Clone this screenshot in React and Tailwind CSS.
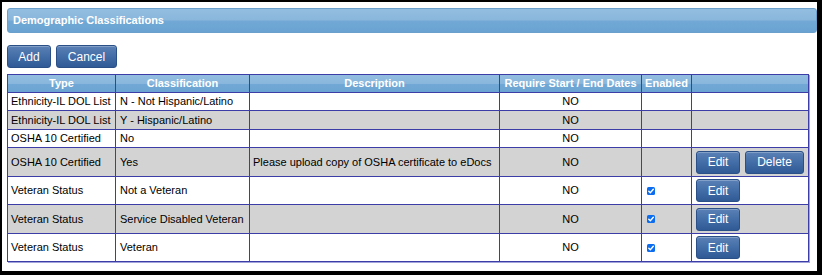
import React from "react";

const rows = [
  { type: "Ethnicity-IL DOL List", cls: "N - Not Hispanic/Latino", desc: "", enabled: false, actions: [], h: "h-[18px]", gray: false },
  { type: "Ethnicity-IL DOL List", cls: "Y - Hispanic/Latino", desc: "", enabled: false, actions: [], h: "h-[19px]", gray: true },
  { type: "OSHA 10 Certified", cls: "No", desc: "", enabled: false, actions: [], h: "h-[18px]", gray: false },
  { type: "OSHA 10 Certified", cls: "Yes", desc: "Please upload copy of OSHA certificate to eDocs", enabled: false, actions: ["Edit", "Delete"], h: "h-[29px]", gray: true },
  { type: "Veteran Status", cls: "Not a Veteran", desc: "", enabled: true, actions: ["Edit"], h: "h-[28px]", gray: false },
  { type: "Veteran Status", cls: "Service Disabled Veteran", desc: "", enabled: true, actions: ["Edit"], h: "h-[29px]", gray: true },
  { type: "Veteran Status", cls: "Veteran", desc: "", enabled: true, actions: ["Edit"], h: "h-[28px]", gray: false },
];

function Btn({ children, w }) {
  return (
    <button
      className={`${w} h-[23px] rounded-[3px] border border-[#2b5088] bg-[linear-gradient(to_bottom,#5b81b6_0%,#456fa8_45%,#2f5a95_100%)] text-white text-[12px] leading-none flex items-center justify-center shadow-[inset_0_1px_0_rgba(255,255,255,0.25)]`}
    >
      {children}
    </button>
  );
}

function Check() {
  return (
    <svg width="8" height="8" viewBox="0 0 8 8" className="block">
      <rect x="0" y="0" width="8" height="8" rx="1.5" fill="#0b6cf0" />
      <path d="M1.8 4.3 L3.3 5.7 L6.3 2.3" stroke="#fff" strokeWidth="1.4" fill="none" strokeLinecap="round" strokeLinejoin="round" />
    </svg>
  );
}

const gloss = "bg-[linear-gradient(to_bottom,#93bee1_0%,#89b6dc_48%,#71a8d5_52%,#6aa3d2_100%)]";
const td = "border border-[#3d3da8] px-[4px] text-[11px] text-black align-middle p-0";

export default function App() {
  return (
    <div className="w-[822px] h-[275px] box-border border-t-2 border-l-2 border-r-[5px] border-b-4 border-black bg-white font-['Liberation_Sans',Arial,sans-serif] overflow-hidden">
      <div className="pt-[6px] pl-[5px]">
        <div className={`h-[25px] rounded-[3px] border border-[#6ba0cc] ${gloss} flex items-center pl-[5px] text-white font-bold text-[11px]`}>
          Demographic Classifications
        </div>
        <div className="flex gap-[5px] mt-[12px]">
          <Btn w="w-[44px]">Add</Btn>
          <Btn w="w-[61px]">Cancel</Btn>
        </div>
        <table className="mt-[6px] table-fixed border-collapse w-[801px] shadow-[1px_1px_0_#a3a3dc]">
          <colgroup>
            <col className="w-[108px]" />
            <col className="w-[134px]" />
            <col className="w-[250px]" />
            <col className="w-[142px]" />
            <col className="w-[50px]" />
            <col className="w-[117px]" />
          </colgroup>
          <thead>
            <tr className={gloss}>
              {["Type", "Classification", "Description", "Require Start / End Dates", "Enabled", ""].map((t, i) => (
                <th key={i} className="border border-[#3d3da8] h-[18px] p-0 text-white font-bold text-[11px] text-center align-middle whitespace-nowrap">
                  {t}
                </th>
              ))}
            </tr>
          </thead>
          <tbody>
            {rows.map((r, i) => (
              <tr key={i} className={r.gray ? "bg-[#d3d3d3]" : "bg-white"}>
                <td className={`${td} ${r.h} pl-[3px] whitespace-nowrap`}>{r.type}</td>
                <td className={`${td} pl-[4px] whitespace-nowrap`}>{r.cls}</td>
                <td className={`${td} pl-[3px] whitespace-nowrap`}>{r.desc}</td>
                <td className={`${td} text-center`}>NO</td>
                <td className={`${td} pl-[5px]`}>{r.enabled ? <Check /> : null}</td>
                <td className={`${td} pl-[4px]`}>
                  {r.actions.length ? (
                    <div className="flex gap-[5px]">
                      {r.actions.map((a) => (
                        <Btn key={a} w={a === "Edit" ? "w-[44px]" : "w-[59px]"}>{a}</Btn>
                      ))}
                    </div>
                  ) : null}
                </td>
              </tr>
            ))}
          </tbody>
        </table>
      </div>
    </div>
  );
}
